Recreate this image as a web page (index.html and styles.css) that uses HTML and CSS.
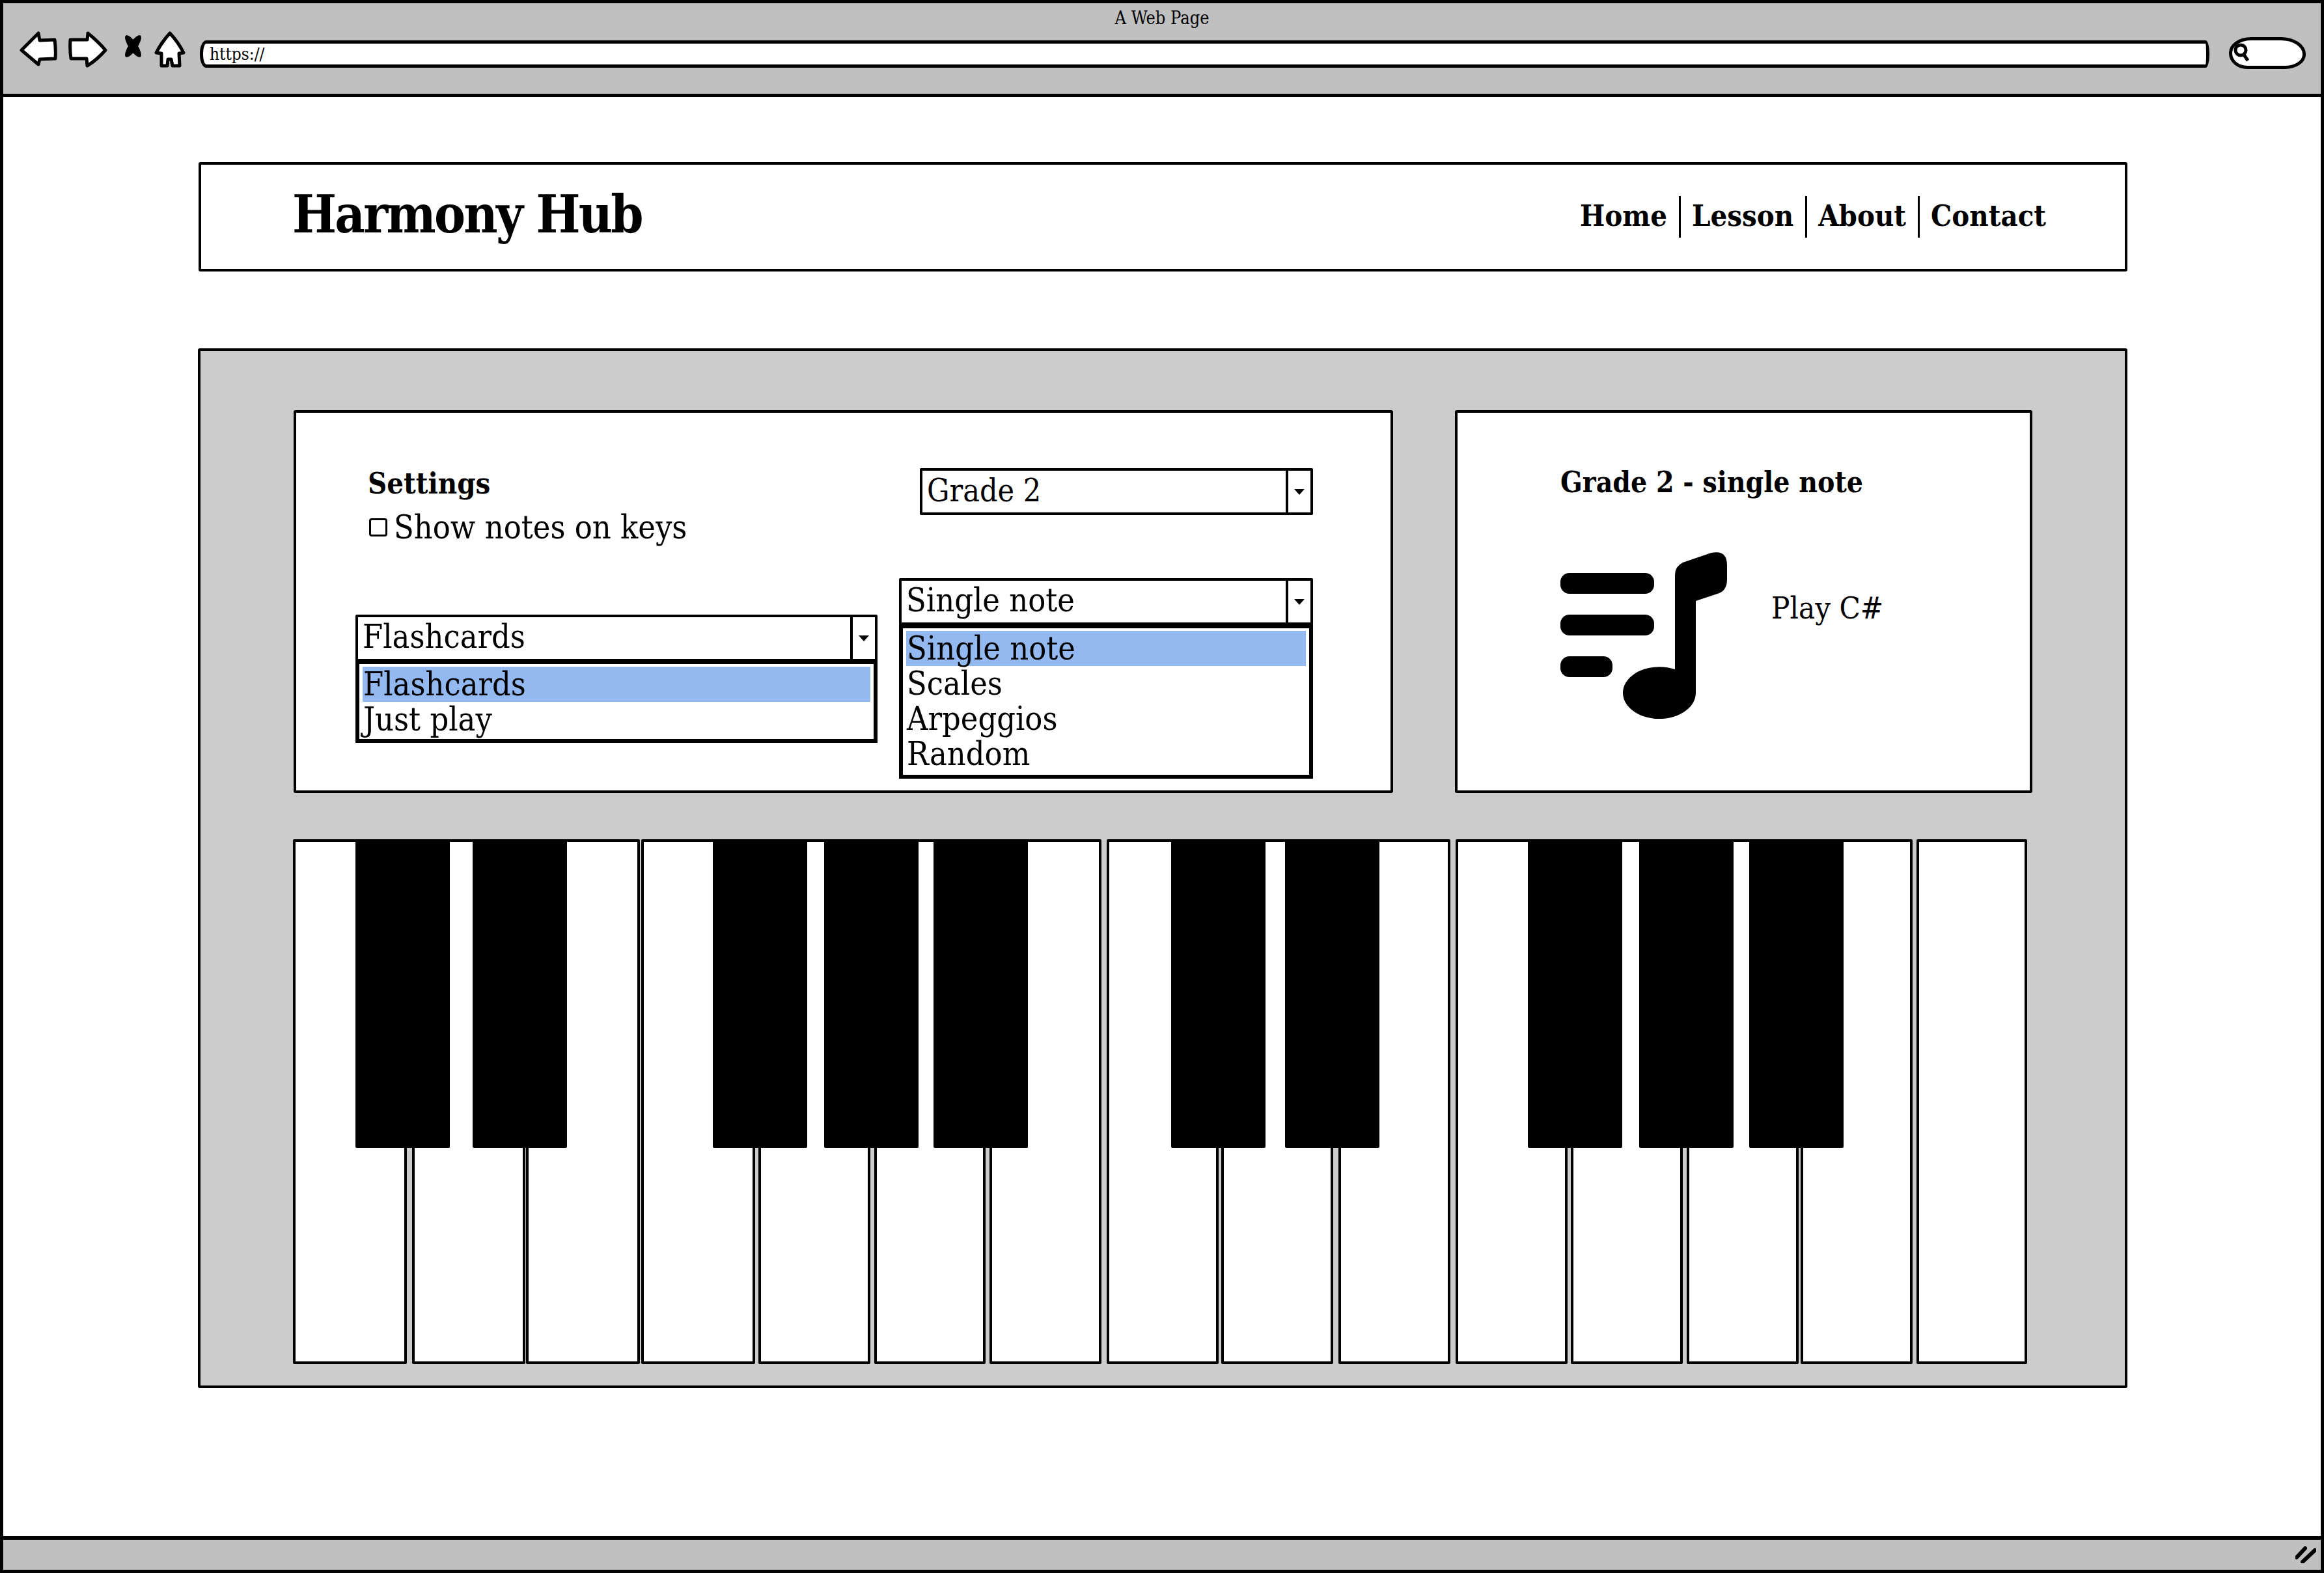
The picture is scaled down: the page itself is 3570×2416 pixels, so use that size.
FILE: index.html
```html
<!DOCTYPE html>
<html lang="en">
  <head>
    <meta charset="UTF-8" />
    <meta name="viewport" content="width=device-width, initial-scale=1.0" />
    <title>Harmony Hub</title>
    <link rel="stylesheet" href="styles.css">
  </head>
  <body>
    <div class="window">
      <div class="toolbar">
        <div class="window-title">A Web Page</div>
        <div class="browser-row">
          <svg class="icon-back" width="58" height="54" viewBox="0 0 58 54">
            <path d="M3 29 L29 3 L31 14 L54 13 Q56 28 55 42 L31 43 L29 51 Z" />
          </svg>
          <svg class="icon-forward" width="60" height="56" viewBox="0 0 60 56">
            <path d="M3 13 L29 13 L30 3 Q46 16 57 29 Q44 44 29 53 L28 42 L4 42 Q2 28 3 13 Z" />
          </svg>
          <svg class="icon-stop" width="33" height="38" viewBox="0 0 33 38">
            <ellipse cx="16.5" cy="19" rx="6.5" ry="20" transform="rotate(34 16.5 19)" />
            <ellipse cx="16.5" cy="19" rx="6.5" ry="20" transform="rotate(-34 16.5 19)" />
          </svg>
          <svg class="icon-home" width="48" height="56" viewBox="0 0 48 56">
            <path d="M24 3 Q37 17 45 33 L38 34 L39 53 L28 53 L26 43 L21 43 L20 53 L11 53 L11 34 L3 33 Q11 17 24 3 Z" />
          </svg>
          <div class="url-bar">https://</div>
          <div class="search-pill">
            <svg width="26" height="30" viewBox="0 0 26 30">
              <circle cx="11" cy="11" r="8" />
              <path d="M16 18 L22 27" />
            </svg>
          </div>
        </div>
      </div>

      <div class="page">
        <header class="site-header">
          <h1 class="logo">Harmony Hub</h1>
          <nav class="site-nav">
            <a>Home</a>
            <a>Lesson</a>
            <a>About</a>
            <a>Contact</a>
          </nav>
        </header>

        <main class="stage">
          <div class="top-row">
            <section class="card settings-card">
              <div class="settings-left">
                <h2 class="settings-title">Settings</h2>
                <label class="check-row"><span class="check-box"></span>Show notes on keys</label>
                <div class="dropdown mode-dropdown">
                  <div class="select">
                    <span class="select-value">Flashcards</span>
                    <span class="select-btn"><i></i></span>
                  </div>
                  <ul class="select-list">
                    <li class="selected">Flashcards</li>
                    <li>Just play</li>
                  </ul>
                </div>
              </div>
              <div class="settings-right">
                <div class="select grade-select">
                  <span class="select-value">Grade 2</span>
                  <span class="select-btn"><i></i></span>
                </div>
                <div class="dropdown type-dropdown">
                  <div class="select">
                    <span class="select-value">Single note</span>
                    <span class="select-btn"><i></i></span>
                  </div>
                  <ul class="select-list">
                    <li class="selected">Single note</li>
                    <li>Scales</li>
                    <li>Arpeggios</li>
                    <li>Random</li>
                  </ul>
                </div>
              </div>
            </section>

            <section class="card result-card">
              <h2 class="result-title">Grade 2 - single note</h2>
              <div class="result-body">
                <svg class="note-icon" width="256" height="256" viewBox="0 0 256 256">
                  <rect x="0" y="32" width="144" height="32" rx="14" />
                  <rect x="0" y="96" width="144" height="32" rx="14" />
                  <rect x="0" y="160" width="80" height="32" rx="14" />
                  <path d="M176 35 Q176 22 188 16 L232 1 Q256 -4 256 20 V42 Q256 58 244 63 L208 75 V216 A56 40 0 1 1 176 180 Z" />
                </svg>
                <p class="prompt">Play C#</p>
              </div>
            </section>
          </div>

          <div class="keyboard">
            <div class="white-keys">
              <div class="key"></div><div class="key"></div><div class="key"></div>
              <div class="key"></div><div class="key"></div><div class="key"></div><div class="key"></div>
              <div class="key"></div><div class="key"></div><div class="key"></div>
              <div class="key"></div><div class="key"></div><div class="key"></div><div class="key"></div><div class="key"></div>
            </div>
            <div class="black-keys">
              <div class="black-key"></div><div class="black-key"></div>
              <div class="black-key"></div><div class="black-key"></div><div class="black-key"></div>
              <div class="black-key"></div><div class="black-key"></div>
              <div class="black-key"></div><div class="black-key"></div><div class="black-key"></div>
            </div>
          </div>
        </main>
      </div>

      <div class="status-bar">
        <svg width="32" height="26" viewBox="0 0 32 26">
          <path d="M2 17 L15 3 M11 24 L30 6" />
        </svg>
      </div>
    </div>
  </body>
</html>
```

FILE: styles.css
```css
html,
body {
  margin: 0;
  padding: 0;
  background: #fff;
  color: #000;
  font-family: "DejaVu Serif", "Liberation Serif", serif;
  font-stretch: condensed;
}
h1,
h2,
p,
ul {
  margin: 0;
  padding: 0;
}
.window {
  box-sizing: border-box;
  width: 3570px;
  height: 2416px;
  border: 5px solid #000;
  display: flex;
  flex-direction: column;
  overflow: hidden;
}

/* browser chrome */
.toolbar {
  box-sizing: border-box;
  height: 144px;
  flex: none;
  background: #c0c0c0;
  border-bottom: 5px solid #000;
}
.window-title {
  height: 43px;
  line-height: 46px;
  text-align: center;
  font-size: 27px;
}
.browser-row {
  display: flex;
  align-items: flex-start;
  padding-left: 25px;
}
.browser-row svg path {
  fill: #fff;
  stroke: #000;
  stroke-width: 5;
  stroke-linejoin: round;
}
.icon-forward {
  margin-left: 17px;
}
.icon-stop {
  margin: 4px 0 0 23px;
}
.icon-home {
  margin-left: 16px;
}
.url-bar {
  box-sizing: border-box;
  width: 3087px;
  height: 42px;
  margin: 14px 0 0 22px;
  padding-left: 10px;
  background: #fff;
  border: 5px solid #000;
  border-radius: 10px 6px 6px 10px / 20px;
  font-size: 26px;
  line-height: 32px;
}
.search-pill {
  box-sizing: border-box;
  width: 118px;
  height: 49px;
  margin: 9px 0 0 30px;
  padding: 4px 0 0 2px;
  background: #fff;
  border: 5px solid #000;
  border-radius: 34px 38px 32px 28px / 24px 26px 22px 24px;
}
.search-pill svg {
  display: block;
}
.browser-row .search-pill path,
.search-pill circle {
  fill: none;
  stroke: #000;
  stroke-width: 5;
}

.page {
  flex: 1;
  padding: 100px 0 0 300px;
}

/* site header */
.site-header {
  box-sizing: border-box;
  width: 2963px;
  height: 168px;
  border: 4px solid #000;
  border-radius: 3px;
  display: flex;
  align-items: center;
  justify-content: space-between;
  padding: 0 103px 0 140px;
}
.logo {
  margin-bottom: 8px;
  font-size: 80px;
  font-weight: 700;
  letter-spacing: -2.7px;
}
.site-nav {
  display: flex;
}
.site-nav a {
  height: 64px;
  line-height: 62px;
  padding: 0 18px 0 17px;
  font-size: 45px;
  font-weight: 700;
  border-left: 3px solid #000;
}
.site-nav a:first-child {
  border-left: 0;
}

/* gray stage */
.stage {
  box-sizing: border-box;
  width: 2964px;
  height: 1597px;
  margin: 118px 0 0 -1px;
  padding: 91px 0 0 143px;
  background: #ccc;
  border: 4px solid #000;
  border-radius: 3px;
}
.top-row {
  display: flex;
  gap: 95px;
}
.card {
  box-sizing: border-box;
  height: 588px;
  background: #fff;
  border: 4px solid #000;
  border-radius: 3px;
}
.settings-card {
  width: 1689px;
  display: flex;
  padding-left: 91px;
}
.settings-left {
  width: 802px;
  margin-right: 33px;
}
.settings-title {
  margin: 76px 0 0 19px;
  font-size: 45px;
  line-height: 66px;
}
.check-row {
  display: flex;
  align-items: center;
  margin-left: 21px;
  font-size: 50px;
  line-height: 68px;
}
.check-box {
  box-sizing: border-box;
  width: 28px;
  height: 28px;
  margin-right: 10px;
  border: 3px solid #000;
  border-radius: 4px;
}
.mode-dropdown {
  margin-top: 100px;
}
.mode-dropdown .select-list {
  margin-top: -2px;
  padding-bottom: 3px;
}
.settings-right {
  width: 636px;
}
.grade-select {
  height: 74px;
  width: 604px;
  margin: 85px 0 0 32px;
}
.grade-select .select-value {
  font-size: 48px;
}
.type-dropdown {
  margin-top: 97px;
}

/* select widgets */
.select {
  box-sizing: border-box;
  height: 72px;
  display: flex;
  justify-content: space-between;
  border: 4px solid #000;
  border-radius: 2px;
}
.select-value {
  padding-left: 7px;
  font-size: 50px;
  line-height: 60px;
}
.select-btn {
  width: 34px;
  display: flex;
  align-items: center;
  justify-content: center;
  border-left: 4px solid #000;
}
.select-btn i {
  border-top: 9px solid #000;
  border-left: 8px solid transparent;
  border-right: 8px solid transparent;
}
.select-list {
  box-sizing: border-box;
  list-style: none;
  margin-top: -1px;
  padding: 4px 5px 5px;
  border: 6px solid #000;
  font-size: 50px;
  line-height: 54px;
}
.select-list li {
  padding-left: 1px;
}
.select-list .selected {
  background: #93b9f0;
}

/* exercise card */
.result-card {
  width: 887px;
  padding-left: 158px;
}
.result-title {
  margin-top: 77px;
  font-size: 44px;
  line-height: 60px;
}
.result-body {
  display: flex;
  margin-top: 77px;
}
.note-icon {
  flex: none;
}
.prompt {
  margin: 56px 0 0 68px;
  font-size: 47px;
  line-height: 60px;
}

/* piano */
.keyboard {
  position: relative;
  margin-top: 71px;
  height: 806px;
}
.white-keys {
  display: flex;
  height: 100%;
}
.key {
  box-sizing: border-box;
  width: 172px;
  flex: none;
  background: #fff;
  border: 4px solid #000;
  border-radius: 2px;
}
.key:nth-child(1) { width: 175px; margin-left: -1px; }
.key:nth-child(2) { width: 174px; margin-left: 8px; }
.key:nth-child(3) { width: 175px; margin-left: 1px; }
.key:nth-child(4) { width: 175px; margin-left: 2px; }
.key:nth-child(5) { margin-left: 5px; }
.key:nth-child(6) { width: 171px; margin-left: 6px; }
.key:nth-child(7) { margin-left: 6px; }
.key:nth-child(8) { margin-left: 8px; }
.key:nth-child(9) { margin-left: 4px; }
.key:nth-child(10) { margin-left: 8px; }
.key:nth-child(11) { margin-left: 8px; }
.key:nth-child(12) { margin-left: 5px; }
.key:nth-child(13) { margin-left: 6px; }
.key:nth-child(14) { margin-left: 3px; }
.key:nth-child(15) { width: 170px; margin-left: 6px; }

.black-keys {
  position: absolute;
  top: 0;
  left: 0;
  display: flex;
  height: 474px;
}
.black-key {
  width: 145px;
  flex: none;
  background: #000;
  border-radius: 0 0 2px 2px;
}
.black-key:nth-child(1) { margin-left: 95px; }
.black-key:nth-child(2) { margin-left: 35px; }
.black-key:nth-child(3) { margin-left: 224px; }
.black-key:nth-child(4) { margin-left: 26px; }
.black-key:nth-child(5) { margin-left: 23px; }
.black-key:nth-child(6) { margin-left: 220px; }
.black-key:nth-child(7) { margin-left: 30px; }
.black-key:nth-child(8) { margin-left: 228px; }
.black-key:nth-child(9) { margin-left: 26px; }
.black-key:nth-child(10) { margin-left: 24px; }

/* bottom bar */
.status-bar {
  box-sizing: border-box;
  height: 52px;
  flex: none;
  background: #c0c0c0;
  border-top: 6px solid #000;
  display: flex;
  justify-content: flex-end;
  align-items: center;
  padding-right: 7px;
}
.status-bar path {
  fill: none;
  stroke: #000;
  stroke-width: 6;
  stroke-linecap: round;
}
```
